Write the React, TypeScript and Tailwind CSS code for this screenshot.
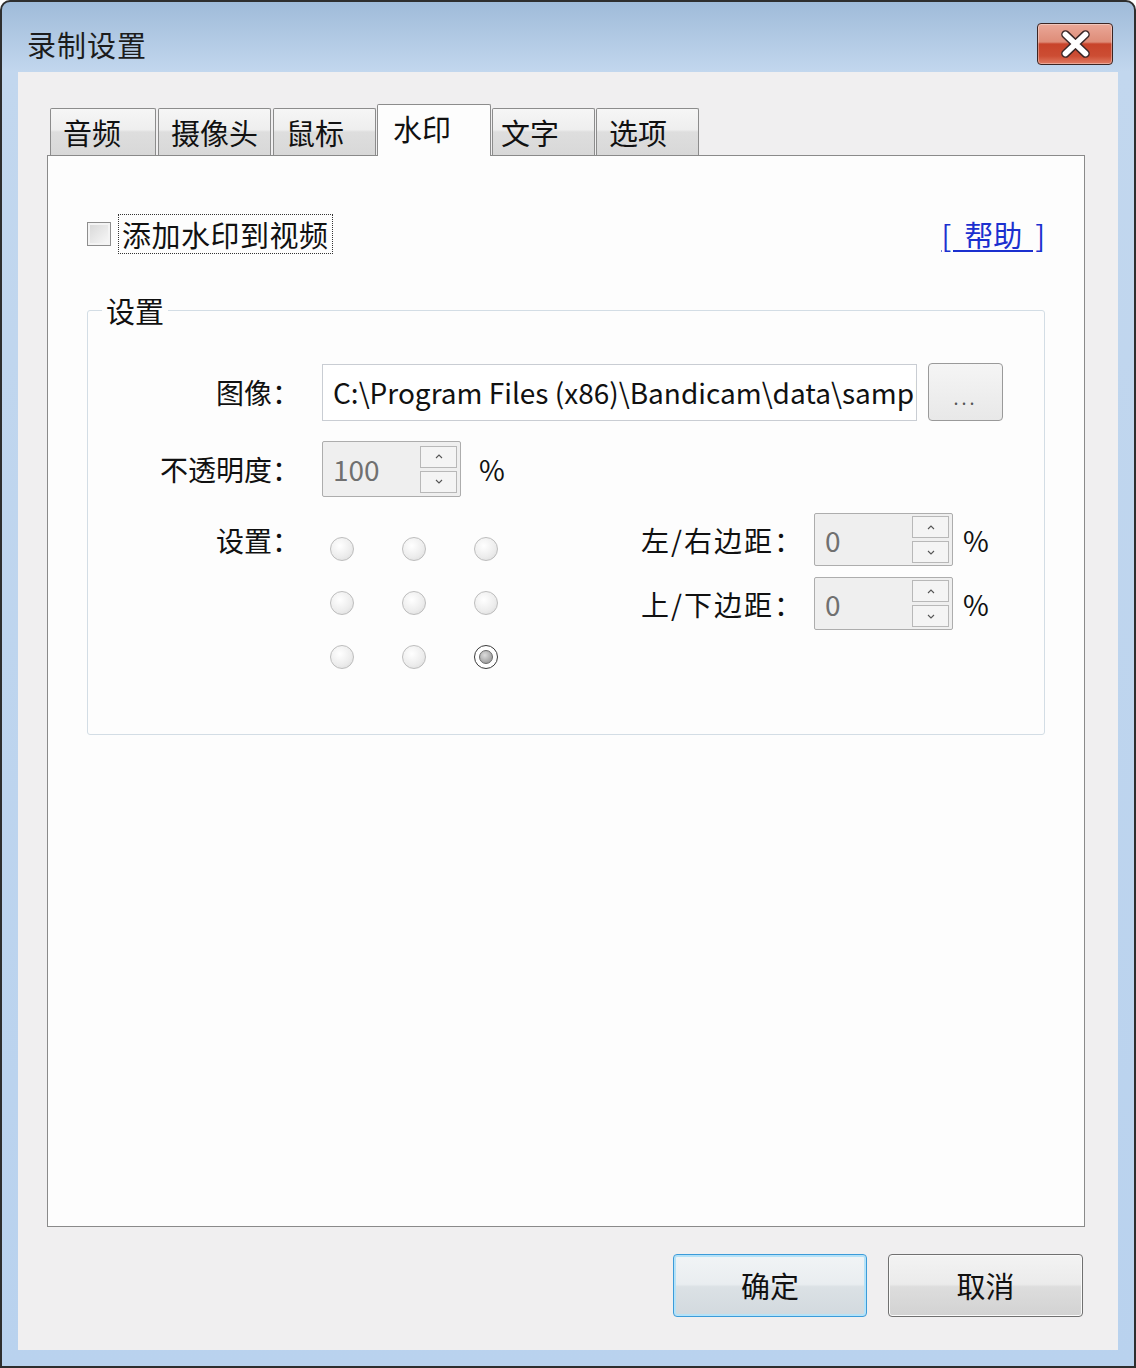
import React from "react";

const tabs = [
  { label: "音频", w: "w-[106px]", ml: "ml-0", pl: "pl-[12px]" },
  { label: "摄像头", w: "w-[113px]", ml: "ml-[2px]", pl: "pl-[12px]" },
  { label: "鼠标", w: "w-[103px]", ml: "ml-[2px]", pl: "pl-[12px]" },
  { label: "水印", w: "w-[114px]", ml: "ml-px", pl: "pl-[15px]", active: true },
  { label: "文字", w: "w-[103px]", ml: "ml-px", pl: "pl-[8px]" },
  { label: "选项", w: "w-[103px]", ml: "ml-px", pl: "pl-[12px]" },
];

function Radio({ checked }: { checked?: boolean }) {
  if (checked) {
    return (
      <div className="flex h-[24px] w-[24px] items-center justify-center rounded-full border-[1.5px] border-[#3a3a3a] bg-white">
        <div className="h-[14px] w-[14px] rounded-full border border-[#6a6a6a] bg-[radial-gradient(circle_at_40%_35%,#dcdcdc,#8c8c8c)]" />
      </div>
    );
  }
  return (
    <div className="h-[24px] w-[24px] rounded-full border border-[#bdbdbd] bg-[radial-gradient(circle_at_40%_35%,#ffffff,#ececec_60%,#d6d6d6)]" />
  );
}

function Caret({ down }: { down?: boolean }) {
  return (
    <svg viewBox="0 0 8 5" className="h-[5px] w-[8px]">
      <path
        d={down ? "M1 1 L4 4 L7 1" : "M1 4 L4 1 L7 4"}
        stroke="#555"
        strokeWidth="1.1"
        fill="none"
      />
    </svg>
  );
}

function Spinner({ value, h }: { value: string; h: string }) {
  return (
    <div className={`flex w-[139px] ${h} items-center justify-between rounded-[2px] border border-[#adadad] bg-[#efefef] pl-[10px] pr-[3px]`}>
      <span className="text-[28px] leading-none text-[#707070]">{value}</span>
      <div className="flex flex-col gap-[3px]">
        <div className="flex h-[22px] w-[37px] items-center justify-center border border-[#b8b8b8] bg-[#f4f4f4]">
          <Caret />
        </div>
        <div className="flex h-[22px] w-[37px] items-center justify-center border border-[#b8b8b8] bg-[#f4f4f4]">
          <Caret down />
        </div>
      </div>
    </div>
  );
}

export default function App() {
  return (
    <div className="h-[1368px] w-[1136px] bg-white [font-family:'Noto_Sans_CJK_SC','Noto_Sans',sans-serif] text-[#111]">
      <div className="flex h-full w-full flex-col rounded-t-[10px] border-2 border-[#2e2e2e] bg-[linear-gradient(to_bottom,#9fbbd9_0px,#c2d7ee_70px,#b9d2ee_100%)]">
        {/* Title bar */}
        <div className="flex h-[70px] justify-between pl-[25px] pr-[21px] pt-[21px]">
          <div className="text-[29px] leading-[42px] tracking-[1px] text-[#1c1c1c]">录制设置</div>
          <button className="h-[42px] w-[76px] rounded-[4px] border border-[#3b2523] bg-[linear-gradient(to_bottom,#eaa898_0%,#de8c78_45%,#c8432a_50%,#cc4d33_80%,#e07a62_100%)] shadow-[inset_0_0_0_1px_rgba(255,255,255,0.35)]">
            <svg viewBox="0 0 76 42" className="h-full w-full">
              <path d="M28 11 L49 31 M49 11 L28 31" stroke="#3a2626" strokeWidth="9" strokeLinecap="round" fill="none" />
              <path d="M28 11 L49 31 M49 11 L28 31" stroke="#ffffff" strokeWidth="6" strokeLinecap="round" fill="none" />
            </svg>
          </button>
        </div>

        {/* Content */}
        <div className="mx-[16px] mb-[16px] flex flex-1 flex-col bg-[#f0eff0] pl-[29px] pr-[33px] pt-[32px]">
          {/* Tabs */}
          <div className="ml-[3px] flex h-[51px] items-end">
            {tabs.map((t) =>
              t.active ? (
                <div
                  key={t.label}
                  className={`relative z-10 -mb-px ${t.ml} ${t.w} h-[52px] rounded-t-[2px] border border-b-0 border-[#8c8c8c] bg-[#fdfdfd] ${t.pl} pt-[3px] text-[29px] leading-[40px]`}
                >
                  {t.label}
                </div>
              ) : (
                <div
                  key={t.label}
                  className={`${t.ml} ${t.w} h-[47px] rounded-t-[2px] border border-b-0 border-[#8c8c8c] bg-[linear-gradient(to_bottom,#f6f6f6_0%,#eeeeee_45%,#dedede_50%,#d8d8d8_100%)] ${t.pl} pt-[1px] text-[29px] leading-[44px]`}
                >
                  {t.label}
                </div>
              )
            )}
          </div>

          {/* Tab panel */}
          <div className="h-[1072px] border border-[#8a8a8a] bg-[#fdfdfd] px-[39px] pt-[58px]">
            <div className="flex h-[40px] items-center justify-between">
              <div className="flex items-center">
                <div className="h-[24px] w-[24px] border border-[#8e8e8e] bg-[linear-gradient(135deg,#d6d6d6,#fafafa)] shadow-[inset_0_0_0_2px_#f4f4f4]" />
                <div className="ml-[7px] h-[40px] border border-dotted border-[#333] px-[3px] text-[29px] leading-[38px] tracking-[0.5px]">
                  添加水印到视频
                </div>
              </div>
              <a className="whitespace-pre text-[29px] leading-[36px] text-[#1b30cf] underline underline-offset-[3px]">
                {"[  帮助  ]"}
              </a>
            </div>

            <fieldset className="mt-[40px] rounded-[3px] border border-[#d3dde5] pb-[65px]">
              <legend className="ml-[14px] px-[4px] text-[29px] leading-[32px]">设置</legend>

              {/* Image */}
              <div className="mt-[37px] flex items-center">
                <div className="w-[212px] text-right text-[28px]">图像：</div>
                <div className="ml-[22px] flex h-[57px] w-[595px] items-center overflow-hidden whitespace-nowrap border border-[#c9cdd3] bg-white pl-[10px] text-[28px]">
                  C:\Program Files (x86)\Bandicam\data\sample.png
                </div>
                <button className="ml-[11px] flex h-[58px] w-[75px] items-end justify-center rounded-[4px] border border-[#9a9a9a] bg-[linear-gradient(to_bottom,#f5f5f5,#e8e8e8)] pb-[14px] text-[18px] leading-none tracking-[3px] text-[#555]">
                  ...
                </button>
              </div>

              {/* Opacity */}
              <div className="mt-[20px] flex items-center">
                <div className="w-[212px] text-right text-[28px]">不透明度：</div>
                <div className="ml-[22px]">
                  <Spinner value="100" h="h-[56px]" />
                </div>
                <span className="ml-[18px] text-[28px]">%</span>
              </div>

              {/* Position */}
              <div className="mt-[16px] flex items-start">
                <div className="mt-[11px] w-[212px] text-right text-[28px] leading-[32px]">设置：</div>
                <div className="ml-[30px] mt-[24px] grid grid-cols-3 gap-x-[48px] gap-y-[30px]">
                  <Radio />
                  <Radio />
                  <Radio />
                  <Radio />
                  <Radio />
                  <Radio />
                  <Radio />
                  <Radio />
                  <Radio checked />
                </div>
                <div className="ml-[143px] flex flex-col gap-[11px]">
                  <div className="flex items-center">
                    <div className="w-[173px] text-[28px] tracking-[2px]">左/右边距：</div>
                    <Spinner value="0" h="h-[53px]" />
                    <span className="ml-[10px] text-[28px]">%</span>
                  </div>
                  <div className="flex items-center">
                    <div className="w-[173px] text-[28px] tracking-[2px]">上/下边距：</div>
                    <Spinner value="0" h="h-[53px]" />
                    <span className="ml-[10px] text-[28px]">%</span>
                  </div>
                </div>
              </div>
            </fieldset>
          </div>

          {/* Dialog buttons */}
          <div className="mr-[2px] mt-[27px] flex justify-end gap-[21px]">
            <button className="h-[63px] w-[194px] rounded-[4px] border border-[#3c9bd9] bg-[linear-gradient(to_bottom,#f1f4f6_0%,#e9edf0_48%,#dbe1e5_52%,#d2d9de_100%)] text-[29px] shadow-[inset_0_0_0_2px_#b5e2f8]">
              确定
            </button>
            <button className="h-[63px] w-[195px] rounded-[4px] border border-[#707070] bg-[linear-gradient(to_bottom,#f3f3f3_0%,#ebebeb_48%,#dddddd_52%,#d2d2d2_100%)] text-[29px] shadow-[inset_0_0_0_1px_#fafafa]">
              取消
            </button>
          </div>
        </div>
      </div>
    </div>
  );
}
